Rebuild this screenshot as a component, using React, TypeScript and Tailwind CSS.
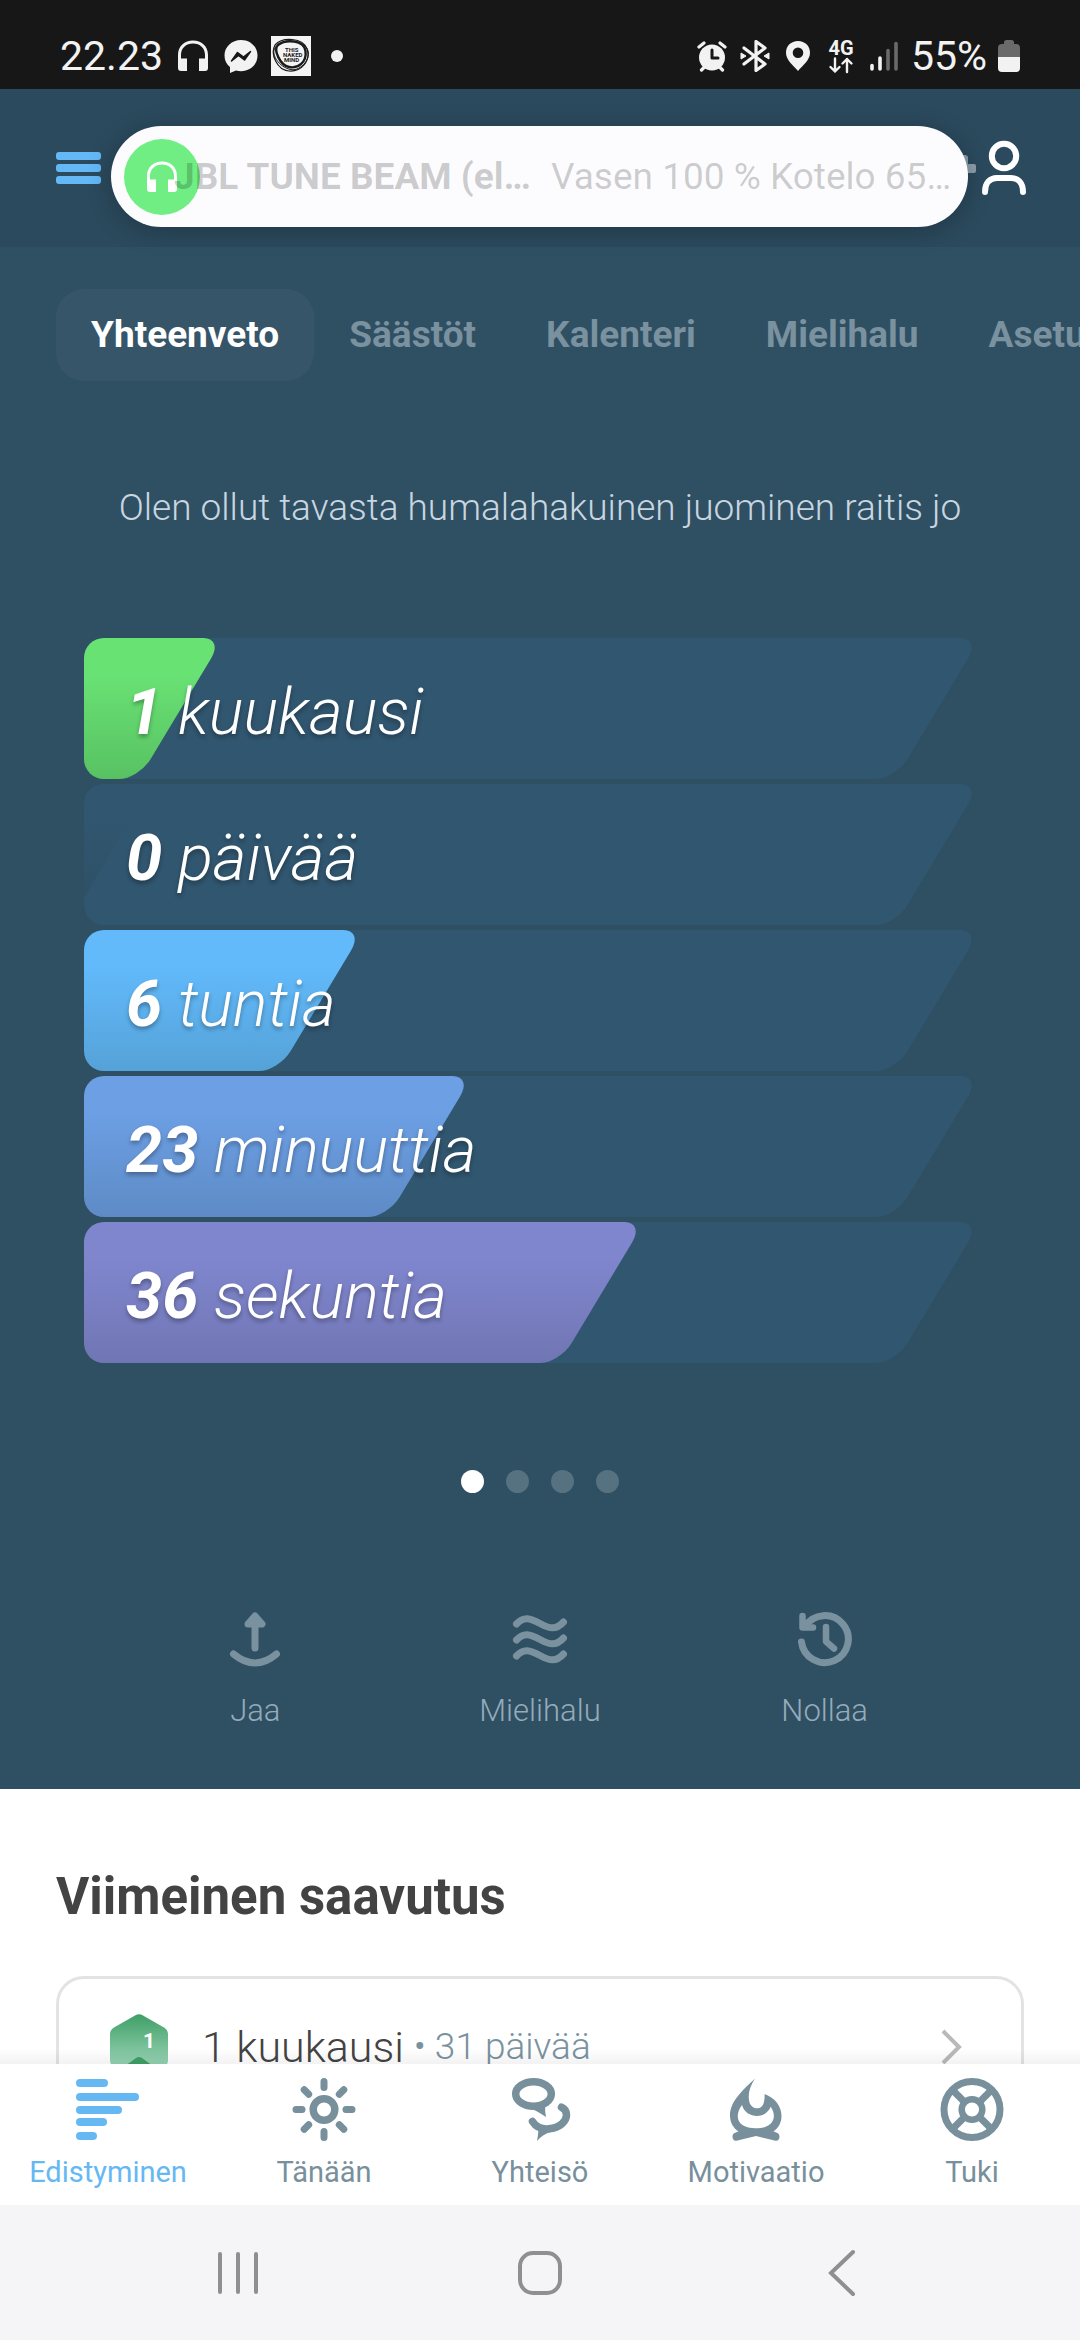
import React, { useState } from 'react';

type IconProps = { className?: string };

const HeadphonesIcon: React.FC<IconProps> = ({ className }) => (
  <svg viewBox="0 0 36 36" className={className} fill="currentColor" aria-hidden="true">
    <path d="M3 17C3 8 9.500 2.500 18 2.500S33 8 33 17V30q0 3-3 3H24V20.500h6V17C30 10 25 5.500 18 5.500S6 10 6 17v3.500h6V33H6q-3 0-3-3Z" />
  </svg>
);

const MessengerIcon: React.FC<IconProps> = ({ className }) => (
  <svg viewBox="0 0 36 36" className={className} aria-hidden="true">
    <path d="M18 2C9 2 1.500 8.500 1.500 17.500c0 5 2 8.500 5.500 11.500V35l6-2.500c1.600.5 3.300.7 5 .7 9 0 16.500-6.500 16.500-15.700S27 2 18 2Z" fill="currentColor" />
    <path d="M8.500 23l6-8.500 6 4.500 7-5.500-6 8.500-6-4.500Z" fill="#171717" stroke="#171717" strokeWidth="1.500" strokeLinejoin="round" />
  </svg>
);

const NakedMindIcon: React.FC<IconProps> = ({ className }) => (
  <svg viewBox="0 0 40 40" className={className} aria-hidden="true">
    <rect width="40" height="40" fill="#f4f4f4" />
    <g fill="none" stroke="#1b1b1b">
      <path d="M4 9C11 1 32 1 36 13s-6 23-18 22S-1 18 4 9Z" strokeWidth="1.200" />
      <path d="M7 9C15 3 33 4 34.500 15S27 33 18 31 2 14 7 9Z" strokeWidth="2.400" />
      <path d="M3 14C6 4 24 2 33 9s3 20-7 24S1 24 3 14Z" strokeWidth="1" />
    </g>
    <g fill="#1b1b1b" fontFamily="Roboto, sans-serif" fontSize="6" fontWeight="700">
      <text x="14" y="16">THIS</text>
      <text x="12" y="21">NAKED</text>
      <text x="13" y="26">MIND</text>
    </g>
  </svg>
);

const AlarmIcon: React.FC<IconProps> = ({ className }) => (
  <svg viewBox="0 0 32 32" className={className} aria-hidden="true">
    <circle cx="16" cy="17.500" r="13" fill="currentColor" />
    <path d="M3 7l5-4M29 7l-5-4M5.500 30l3-3M26.500 30l-3-3" stroke="currentColor" strokeWidth="3.200" strokeLinecap="round" />
    <path d="M16 10v8h6" stroke="#171717" strokeWidth="3" strokeLinecap="round" strokeLinejoin="round" fill="none" />
  </svg>
);

const BluetoothIcon: React.FC<IconProps> = ({ className }) => (
  <svg viewBox="0 0 32 32" className={className} aria-hidden="true">
    <path d="M5 8l21 16-9 6.500V1.500L26 8 5 24" fill="none" stroke="currentColor" strokeWidth="3.200" strokeLinecap="round" strokeLinejoin="round" />
    <path d="M2 13l5 3-5 3ZM30 13l-5 3 5 3Z" fill="currentColor" stroke="currentColor" strokeWidth="1" strokeLinejoin="round" />
  </svg>
);

const PinIcon: React.FC<IconProps> = ({ className }) => (
  <svg viewBox="0 0 32 32" className={className} aria-hidden="true">
    <path fillRule="evenodd" fill="currentColor" d="M16 1C9 1 4 6 4 12.700 4 20 11 25 16 31c5-6 12-11 12-18.300C28 6 23 1 16 1Zm0 6.500a5.300 5.300 0 1 1 0 10.600 5.300 5.300 0 0 1 0-10.600Z" />
  </svg>
);

const DataIcon: React.FC<IconProps> = ({ className }) => (
  <svg viewBox="0 0 32 36" className={className} aria-hidden="true">
    <text x="16" y="17" textAnchor="middle" fontFamily="Roboto, sans-serif" fontSize="20" fontWeight="700" fill="currentColor">4G</text>
    <path d="M10 20.500v13M5.500 29l4.500 4.500 4.500-4.500M22 34V21M17.500 25.500 22 21l4.500 4.500" fill="none" stroke="currentColor" strokeWidth="2.400" strokeLinecap="round" strokeLinejoin="round" />
  </svg>
);

const SignalIcon: React.FC<IconProps> = ({ className }) => (
  <svg viewBox="0 0 32 32" className={className} strokeWidth="3.600" strokeLinecap="round" aria-hidden="true">
    <path d="M4 25.500V29M12 18v11" stroke="#f2f2f2" />
    <path d="M20 10.500V29M28 3.500V29" stroke="#6a6a6a" />
  </svg>
);

const BatteryIcon: React.FC<IconProps> = ({ className }) => (
  <svg viewBox="0 0 22 32" className={className} aria-hidden="true">
    <path d="M0 17V8q0-4 4-4h2V2.500Q6 0 8.500 0h5Q16 0 16 2.500V4h2q4 0 4 4v9Z" fill="#6a6a6a" />
    <path d="M0 17h22v11q0 4-4 4H4q-4 0-4-4Z" fill="#f2f2f2" />
  </svg>
);

const UserIcon: React.FC<IconProps> = ({ className }) => (
  <svg viewBox="0 0 46 56" className={className} fill="none" stroke="currentColor" strokeWidth="6" strokeLinecap="round" aria-hidden="true">
    <circle cx="23" cy="16" r="12.200" />
    <path d="M4 52C4 43 9 38 16 38h14c7 0 12 5 12 14" />
  </svg>
);

const ShareIcon: React.FC<IconProps> = ({ className }) => (
  <svg viewBox="0 0 60 60" className={className} fill="none" stroke="currentColor" strokeWidth="7" strokeLinecap="round" strokeLinejoin="round" aria-hidden="true">
    <path d="M30 9v30M23 15l7-8 7 8ZM8.500 45q21.500 18 43 0" />
  </svg>
);

const WavesIcon: React.FC<IconProps> = ({ className }) => (
  <svg viewBox="0 0 60 60" className={className} fill="none" stroke="currentColor" strokeWidth="7" strokeLinecap="round" aria-hidden="true">
    <path d="M6.500 15C14 7 20 9 30 14.500S46 21 53.500 13" />
    <path d="M6.500 31C14 23 20 25 30 30.500S46 37 53.500 29" />
    <path d="M6.500 47C14 39 20 41 30 46.500S46 53 53.500 45" />
  </svg>
);

const ResetIcon: React.FC<IconProps> = ({ className }) => (
  <svg viewBox="0 0 60 60" className={className} fill="none" stroke="currentColor" strokeLinecap="round" strokeLinejoin="round" aria-hidden="true">
    <path d="M6.500 33A23.500 23.500 0 1 0 10 17.500" strokeWidth="7" />
    <path d="M7.500 7v11.500H18M31 18v14.500l8 7" strokeWidth="6.500" />
  </svg>
);

const ProgressIcon: React.FC<IconProps> = ({ className }) => (
  <svg viewBox="0 0 64 64" className={className} fill="currentColor" aria-hidden="true">
    <rect x="0" y="1" width="32" height="8" rx="4" />
    <rect x="0" y="15" width="63" height="8" rx="4" />
    <rect x="0" y="28" width="46" height="8" rx="4" />
    <rect x="0" y="40" width="31" height="8" rx="4" />
    <rect x="0" y="54" width="21" height="8" rx="4" />
  </svg>
);

const SunIcon: React.FC<IconProps> = ({ className }) => (
  <svg viewBox="0 0 64 64" className={className} fill="none" stroke="currentColor" strokeWidth="7" strokeLinecap="round" aria-hidden="true">
    <circle cx="32" cy="31.500" r="10.800" strokeWidth="7.500" />
    <path d="M32 3.500v6M32 53.500v6M4 31.500h6M54 31.500h6M12.200 11.700l4.500 4.500M47.300 46.800l4.500 4.500M51.800 11.700l-4.500 4.500M16.700 46.800l-4.500 4.500" />
  </svg>
);

const ChatIcon: React.FC<IconProps> = ({ className }) => (
  <svg viewBox="0 0 64 64" className={className} aria-hidden="true">
    <g fill="none" stroke="currentColor" strokeWidth="7.500" strokeLinecap="round">
      <ellipse cx="25.500" cy="16" rx="17.800" ry="12.200" />
      <path d="M24.500 43.500C28 49 34 51.500 41 50.800 52 50 58.500 43 58.500 37c0-3.500-2-6.500-5-7.800" />
    </g>
    <path d="M21 30q5 1 17 9-1-5-1-11ZM30 47q1 6-1 16 6-7 14-9Z" fill="currentColor" />
  </svg>
);

const FireIcon: React.FC<IconProps> = ({ className }) => (
  <svg viewBox="0 0 64 64" className={className} aria-hidden="true">
    <path
      fill="currentColor"
      fillRule="evenodd"
      d="M31 .5C26 8 24 15 25 22c.5 5 4 8.300 8 8.300 5 0 8-4 7.600-14.300C51 20 57.500 28 57.500 38c0 6.500-3 12-8 15.500l3.500 1.200c4 1.500 3 8.800-1.500 8L32 58l-19.500 4.700c-4.500.8-5.500-6.500-1.500-8l3.500-1.200C9 50 6 44 6 37.500 6 23 19 12 31 .5ZM18 27c-3 4-4.500 8-4.200 12 .5 7 7 11.300 18 11.300s17-4 18-11c.3-4-.8-7.500-3.100-10.600-2.700 6-7.700 9.300-13.500 9.300C26 38 20 34 18 27Z"
    />
  </svg>
);

const BuoyIcon: React.FC<IconProps> = ({ className }) => (
  <svg viewBox="0 0 64 64" className={className} fill="none" stroke="currentColor" strokeWidth="7" aria-hidden="true">
    <circle cx="32" cy="31.500" r="28" />
    <circle cx="32" cy="31.500" r="10.300" strokeWidth="6.500" />
    <path d="M12 11.500l12.500 12.500M52 11.500 39.500 24M12 51.500 24.500 39M52 51.500 39.500 39" />
  </svg>
);

const MonthBadge: React.FC<IconProps> = ({ className }) => (
  <svg viewBox="0 0 58 66" className={className} aria-hidden="true">
    <defs>
      <linearGradient id="badge" x1="0" y1="0" x2="0" y2="1">
        <stop offset="0" stopColor="#3f9f66" />
        <stop offset="0.700" stopColor="#90cfae" />
        <stop offset="1" stopColor="#a5dabd" />
      </linearGradient>
    </defs>
    <path d="M25 1.500q4-2.500 8 0l21 12q4 2.500 4 7v26q0 4-4 6.500l-21 12q-4 2-8 0L4 53q-4-2.500-4-6.500v-26q0-4.500 4-7Z" fill="url(#badge)" />
    <path d="M15 52l11-8q3-2 6 0l11 8-14 10Z" fill="#3f9f66" />
    <text x="33" y="34" fontFamily="Roboto, sans-serif" fontSize="21" fontWeight="700" fill="#fff">1</text>
  </svg>
);

const tabs = ['Yhteenveto', 'Säästöt', 'Kalenteri', 'Mielihalu', 'Asetukset'];

const counters = [
  { value: 1, unit: 'kuukausi', percent: 11.4, fill: 'bg-linear-to-b from-[#69e274] from-25% to-[#58c263]' },
  { value: 0, unit: 'päivää', percent: 3, fill: 'bg-linear-to-b from-[#31566f] from-25% to-[#2d4f63]' },
  { value: 6, unit: 'tuntia', percent: 27.7, fill: 'bg-linear-to-b from-[#62bafb] from-25% to-[#55a2d8]' },
  { value: 23, unit: 'minuuttia', percent: 40.5, fill: 'bg-linear-to-b from-[#6c9fe4] from-25% to-[#5e8bc6]' },
  { value: 36, unit: 'sekuntia', percent: 60.7, fill: 'bg-linear-to-b from-[#8086ce] from-25% to-[#7076b3]' },
];

const actions = [
  { label: 'Jaa', icon: ShareIcon },
  { label: 'Mielihalu', icon: WavesIcon },
  { label: 'Nollaa', icon: ResetIcon },
];

const navItems = [
  { label: 'Edistyminen', icon: ProgressIcon },
  { label: 'Tänään', icon: SunIcon },
  { label: 'Yhteisö', icon: ChatIcon },
  { label: 'Motivaatio', icon: FireIcon },
  { label: 'Tuki', icon: BuoyIcon },
];

const StatusBar: React.FC = () => (
  <div className="flex h-[89px] shrink-0 items-center justify-between bg-[#171717] px-[60px] pt-[23px] text-[41px] leading-none text-[#f2f2f2]">
    <div className="flex items-center gap-3">
      <span>22.23</span>
      <HeadphonesIcon className="size-9" />
      <MessengerIcon className="size-9" />
      <NakedMindIcon className="size-10" />
      <span className="ml-2 size-3 rounded-full bg-[#f2f2f2]" />
    </div>
    <div className="flex items-center gap-[11px]">
      <AlarmIcon className="size-8" />
      <BluetoothIcon className="size-8" />
      <PinIcon className="size-8" />
      <DataIcon className="h-9 w-8 overflow-visible" />
      <SignalIcon className="size-8" />
      <span>55%</span>
      <BatteryIcon className="h-8 w-[22px]" />
    </div>
  </div>
);

// Slanted bar: the inner box is skewed, the outer one clips it to straight rounded left corners
const SlantedBar: React.FC<{ percent: number; fill: string }> = ({ percent, fill }) => (
  <div className="absolute inset-y-0 left-0" style={{ width: `${percent}%` }}>
    <div className="absolute inset-y-0 -right-12 left-0 overflow-hidden rounded-l-[20px]">
      <div className={`absolute inset-y-0 right-12 -left-12 -skew-x-[31deg] rounded-r-[20px] ${fill}`} />
    </div>
  </div>
);

export default function App() {
  const [activeTab, setActiveTab] = useState('Yhteenveto');
  const [activeNav, setActiveNav] = useState('Edistyminen');

  return (
    <div className="flex h-screen flex-col overflow-hidden bg-white font-['Roboto',sans-serif]">
      <StatusBar />

      {/* Header */}
      <header className="relative z-10 flex h-[158px] shrink-0 items-center justify-between bg-[#2b4a5d] pr-[53px] pl-14">
        <button aria-label="Valikko" className="flex w-[45px] flex-col gap-1">
          <span className="h-2 rounded-[3px] bg-[#64b8f6]" />
          <span className="h-2 rounded-[3px] bg-[#64b8f6]" />
          <span className="h-2 rounded-[3px] bg-[#64b8f6]" />
        </button>
        <div className="flex items-center gap-1 text-white">
          <svg viewBox="0 0 28 28" className="size-7 text-[#8d9faa]" fill="currentColor" aria-hidden="true">
            <rect x="9" y="1" width="10" height="26" rx="3" />
            <rect x="1" y="10" width="26" height="9" rx="2" />
          </svg>
          <button aria-label="Profiili">
            <UserIcon className="h-14 w-[46px]" />
          </button>
        </div>

        {/* Device toast */}
        <div className="absolute top-[37px] right-[112px] left-[111px] flex h-[101px] items-center rounded-full bg-[#fcfcfe] pr-4 pl-[13px] text-[37px] whitespace-nowrap text-black/20 shadow-[0_4px_24px_rgba(0,0,0,0.25)]">
          <span className="flex size-[76px] shrink-0 items-center justify-center rounded-full bg-[#70ee83]">
            <HeadphonesIcon className="size-9 text-white" />
          </span>
          <span className="relative -ml-[26px] font-bold">JBL TUNE BEAM (el…</span>
          <span className="ml-5">Vasen 100 % Kotelo 65…</span>
        </div>
      </header>

      <main className="relative min-h-0 flex-1 overflow-hidden">
        <section className="bg-[#2f4f63] pb-[60px]">
          <div role="tablist" className="flex overflow-hidden pt-[42px] pl-14">
            {tabs.map((tab) => (
              <button
                key={tab}
                role="tab"
                aria-selected={tab === activeTab}
                onClick={() => setActiveTab(tab)}
                className={`h-[92px] shrink-0 rounded-[28px] px-[35px] text-[37px] font-bold ${
                  tab === activeTab ? 'bg-[#365569] text-white' : 'text-[#7a919f]'
                }`}
              >
                {tab}
              </button>
            ))}
          </div>

          <p className="mt-[103px] text-center text-[37px] leading-[48px] font-light whitespace-nowrap text-[#c8d6e0]">
            Olen ollut tavasta humalahakuinen juominen raitis jo
          </p>

          <div className="mt-[106px] mr-[142px] ml-[84px] flex flex-col gap-[5px]">
            {counters.map((counter) => (
              <div key={counter.unit} className="relative flex h-[141px] items-center pt-2 pl-[42px]">
                <SlantedBar percent={100} fill="bg-[#31566f]" />
                <SlantedBar percent={counter.percent} fill={counter.fill} />
                <p className="relative text-[65px] leading-none font-light whitespace-nowrap text-white italic [text-shadow:0_3px_4px_rgba(0,0,0,0.3)]">
                  <b className="font-bold">{counter.value}</b> {counter.unit}
                </p>
              </div>
            ))}
          </div>

          <div className="mt-[107px] flex justify-center gap-[22px]">
            {[0, 1, 2, 3].map((page) => (
              <span key={page} className={`size-[23px] rounded-full ${page === 0 ? 'bg-white' : 'bg-[#56717f]'}`} />
            ))}
          </div>

          <div className="mt-[116px] grid grid-cols-3 px-[113px]">
            {actions.map(({ label, icon: Icon }) => (
              <button key={label} className="flex flex-col items-center gap-6">
                <Icon className="size-[60px] text-[#7a929f]" />
                <span className="text-[31px] leading-9 font-light text-[#94abba]">{label}</span>
              </button>
            ))}
          </div>
        </section>

        <section className="bg-white px-14 pt-[78px]">
          <h2 className="text-[51px] leading-[60px] font-bold text-[#434343]">Viimeinen saavutus</h2>
          <button className="mt-[49px] flex w-full items-center rounded-[28px] border-[3px] border-[#e3e3e3] py-[35px] pr-[57px] pl-[51px] whitespace-nowrap">
            <MonthBadge className="h-[66px] w-[58px] shrink-0" />
            <span className="ml-[34px] text-[43px] leading-[50px] font-light text-[#434343]">1 kuukausi</span>
            <span className="ml-[10px] text-[37px] leading-[50px] font-light text-[#7a929f]">• 31 päivää</span>
            <svg viewBox="0 0 24 40" className="ml-auto h-10 w-6" fill="none" stroke="#b9b9b9" strokeWidth="4" aria-hidden="true">
              <path d="M3 4l16 16L3 36" />
            </svg>
          </button>
        </section>

        <div className="absolute inset-x-0 bottom-0 h-4 bg-linear-to-b from-black/0 to-black/5" />
      </main>

      {/* Bottom navigation */}
      <nav className="grid h-[141px] shrink-0 grid-cols-5 bg-white pt-[14px]">
        {navItems.map(({ label, icon: Icon }) => (
          <button
            key={label}
            onClick={() => setActiveNav(label)}
            className={`flex flex-col items-center gap-3 ${label === activeNav ? 'text-[#66b8f3]' : 'text-[#78909c]'}`}
          >
            <Icon className="size-16" />
            <span className="text-[29px] leading-9">{label}</span>
          </button>
        ))}
      </nav>

      {/* System buttons */}
      <div className="flex h-[135px] shrink-0 items-center justify-between bg-[#f5f5f7] px-[206px] text-[#8f8f8f]">
        <button aria-label="Viimeisimmät">
          <svg viewBox="0 0 64 64" className="size-16" stroke="currentColor" strokeWidth="4" strokeLinecap="round">
            <path d="M14 13v38M32 13v38M50 13v38" />
          </svg>
        </button>
        <button aria-label="Koti">
          <svg viewBox="0 0 64 64" className="size-16" fill="none" stroke="currentColor" strokeWidth="4">
            <rect x="12" y="12" width="40" height="40" rx="13" />
          </svg>
        </button>
        <button aria-label="Takaisin">
          <svg viewBox="0 0 64 64" className="size-16" fill="none" stroke="currentColor" strokeWidth="4" strokeLinecap="round">
            <path d="M43 11 21 32l22 21" />
          </svg>
        </button>
      </div>
    </div>
  );
}
